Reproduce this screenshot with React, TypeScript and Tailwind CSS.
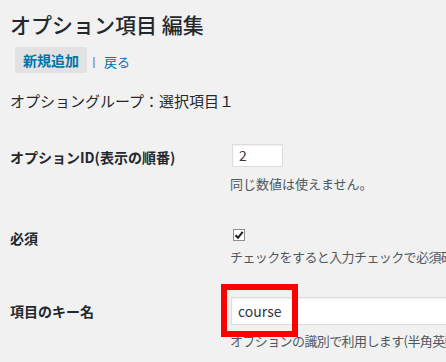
import React from "react"

const font = { fontFamily: '"Noto Sans CJK JP", "Noto Sans", sans-serif' }

export default function App() {
    return (
        <div className="relative w-[446px] h-[362px] overflow-hidden bg-[#f1f1f1] pl-[10px] text-[#23282d]" style={font}>
            <h1 className="pt-[9px] text-[21px] leading-[30px] font-medium whitespace-nowrap">オプション項目 編集</h1>

            <div className="mt-[8px] flex items-center">
                <span className="ml-[5px] h-[26px] w-[72px] flex items-center justify-center bg-[#e2e2e2] text-[14px] font-bold text-[#0073aa] rounded-[2px]">
                    新規追加
                </span>
                <span className="ml-[6px] w-[2px] h-[11px] mt-[4px] bg-[#8fb3dc]"></span>
                <span className="ml-[9px] text-[13px] text-[#0073aa] mt-[4px]">戻る</span>
            </div>

            <h2 className="mt-[18px] text-[15px] leading-[20px] font-normal whitespace-nowrap">オプショングループ：選択項目１</h2>

            {/* オプションID */}
            <div className="mt-[33px] flex">
                <div className="w-[220px] shrink-0 pt-[4px] text-[14px] leading-[19px] font-bold whitespace-nowrap">オプションID(表示の順番)</div>
                <div className="flex flex-col">
                    <div className="ml-[2px] w-[51px] h-[23px] bg-white border border-[#ddd] shadow-[inset_0_1px_2px_rgba(0,0,0,0.07)] px-[6px] text-[14px] leading-[21px] text-[#32373c]">2</div>
                    <p className="mt-[8px] text-[13px] leading-[18px] text-[#50575e] whitespace-nowrap">同じ数値は使えません。</p>
                </div>
            </div>

            {/* 必須 */}
            <div className="mt-[36px] flex">
                <div className="w-[220px] shrink-0 text-[14px] leading-[19px] font-bold whitespace-nowrap">必須</div>
                <div className="flex flex-col">
                    <div className="ml-[3px] w-[12px] h-[12px] bg-white border border-[#8c8f94] flex items-center justify-center">
                        <svg width="10" height="10" viewBox="0 0 10 10">
                            <path d="M1.5 5.2 L4 7.8 L8.7 1.8" fill="none" stroke="#1e1e1e" strokeWidth="2" />
                        </svg>
                    </div>
                    <p className="mt-[7px] text-[13px] leading-[18px] tracking-[-0.6px] text-[#50575e] whitespace-nowrap">チェックをすると入力チェックで必須確認を行います。</p>
                </div>
            </div>

            {/* 項目のキー名 */}
            <div className="mt-[31px] flex">
                <div className="w-[220px] shrink-0 pt-[5px] text-[14px] leading-[19px] font-bold whitespace-nowrap">項目のキー名</div>
                <div className="flex flex-col">
                    <div className="ml-[1px] w-[300px] h-[28px] bg-white border border-[#ddd] shadow-[inset_0_1px_2px_rgba(0,0,0,0.07)] px-[6px] text-[14px] leading-[26px] text-[#32373c]">course</div>
                    <p className="mt-[7px] text-[13px] leading-[18px] tracking-[-0.6px] text-[#50575e] whitespace-nowrap">オプションの識別で利用します(半角英数字)</p>
                </div>
            </div>

            {/* 注釈の赤枠 */}
            <div className="absolute left-[221px] top-[284px] w-[77px] h-[53px] border-[6px] border-[#ff0000]"></div>
        </div>
    )
}
